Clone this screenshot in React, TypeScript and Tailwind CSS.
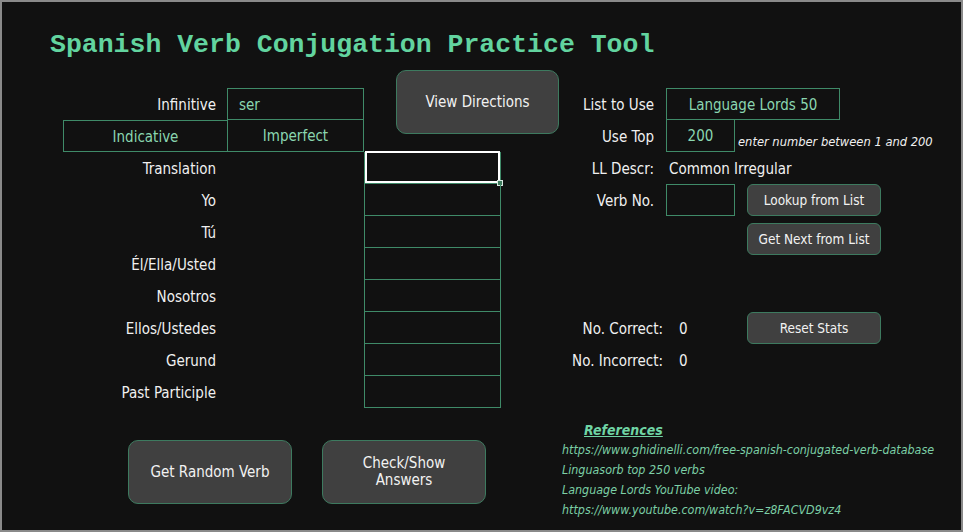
import React from 'react';

// Excel-style practice sheet, dark theme.
const FONT = "font-['DejaVu_Sans_Condensed','DejaVu_Sans',sans-serif] font-stretch-condensed";
const CELL = 'border-[#3f8a68]';
const GREEN_TXT = 'text-[#8ad6b0]';

const FORMS = [
  'Translation',
  'Yo',
  'Tú',
  'Él/Ella/Usted',
  'Nosotros',
  'Ellos/Ustedes',
  'Gerund',
  'Past Participle',
];

function SheetButton({
  children,
  className,
}: {
  children: React.ReactNode;
  className: string;
}) {
  return (
    <button
      className={`flex items-center justify-center bg-[#404040] border border-[#3d7a5f] text-[#f2f2f2] text-center ${className}`}
    >
      {children}
    </button>
  );
}

export default function App() {
  return (
    <div
      className={`w-[963px] h-[532px] overflow-hidden bg-[#111111] border-2 border-[#8a8a8a] text-[#f0f0f0] text-[15px] ${FONT}`}
    >
      {/* Title */}
      <div className="h-[68px] pt-[29px] pl-[48px]">
        <h1 className="font-['Liberation_Mono',monospace] font-bold text-[26.5px] leading-[28px] text-[#62d49f]">
          Spanish Verb Conjugation Practice Tool
        </h1>
      </div>

      <div className="flex">
        {/* Left: verb grid */}
        <div className="ml-[61px] w-[496px]">
          <div className="grid grid-cols-[164px_137px_32px_105px_58px] grid-rows-[18px_32px_14px_18px_repeat(8,32px)]">
            <div className="col-start-1 row-start-2 flex items-center justify-end pr-[11px] pt-[2px]">
              Infinitive
            </div>
            <div className={`col-start-2 row-start-2 border ${CELL} flex items-center pl-[11px] pt-[2px] ${GREEN_TXT}`}>
              ser
            </div>
            <div className="col-start-4 col-span-2 row-start-1 row-span-3">
              <SheetButton className="w-full h-full rounded-[10px]">View Directions</SheetButton>
            </div>
            <div className={`col-start-1 row-start-3 row-span-2 border-l border-t border-b ${CELL} flex items-center justify-center pt-[2px] ${GREEN_TXT}`}>
              Indicative
            </div>
            <div className={`col-start-2 row-start-3 row-span-2 border-l border-r border-b ${CELL} flex items-center justify-center pt-[2px] ${GREEN_TXT}`}>
              Imperfect
            </div>

            {FORMS.map((f, i) => (
              <React.Fragment key={f}>
                <div
                  className="col-start-1 flex items-center justify-end pr-[11px] pt-[2px]"
                  style={{ gridRowStart: i + 5 }}
                >
                  {f}
                </div>
                <div
                  className={`col-start-3 col-span-2 relative border-x border-b ${CELL}`}
                  style={{ gridRowStart: i + 5 }}
                >
                  {i === 0 && (
                    <>
                      <div className="absolute inset-0 -top-px border-2 border-white" />
                      <div className="absolute -right-[3px] -bottom-[3px] w-[6px] h-[6px] bg-[#3d7a5c] border border-[#d8e8e0]" />
                    </>
                  )}
                </div>
              </React.Fragment>
            ))}
          </div>

          <div className="flex gap-[30px] mt-[32px] ml-[65px]">
            <SheetButton className="w-[164px] h-[64px] rounded-[10px]">Get Random Verb</SheetButton>
            <SheetButton className="w-[164px] h-[64px] rounded-[10px] leading-[17px]">
              Check/Show
              <br />
              Answers
            </SheetButton>
          </div>
        </div>

        {/* Right: list controls, stats, references */}
        <div className="w-[400px] pt-[18px]">
          <div className="flex h-[32px]">
            <div className="w-[107px] flex items-center justify-end pr-[12px] pt-[2px]">List to Use</div>
            <div className={`w-[174px] border ${CELL} flex items-center justify-center pt-[2px] ${GREEN_TXT}`}>
              Language Lords 50
            </div>
          </div>
          <div className="flex h-[32px]">
            <div className="w-[107px] flex items-center justify-end pr-[12px] pt-[2px]">Use Top</div>
            <div className={`w-[69px] border-x border-b ${CELL} flex items-center justify-center pt-[2px] ${GREEN_TXT}`}>
              200
            </div>
            <div className="ml-[3px] pt-[15px] italic text-[12.8px] leading-[14px] whitespace-nowrap">
              enter number between 1 and 200
            </div>
          </div>
          <div className="flex h-[32px] items-center pt-[2px]">
            <div className="w-[107px] text-right pr-[12px]">LL Descr:</div>
            <div className="pl-[3px]">Common Irregular</div>
          </div>
          <div className="flex h-[32px]">
            <div className="w-[107px] flex items-center justify-end pr-[12px] pt-[2px]">Verb No.</div>
            <div className={`w-[69px] border ${CELL}`} />
            <SheetButton className="ml-[12px] w-[134px] h-[32px] rounded-[6px] text-[13.5px]">
              Lookup from List
            </SheetButton>
          </div>
          <div className="flex h-[32px] items-start">
            <SheetButton className="ml-[188px] mt-[7px] w-[134px] h-[32px] rounded-[6px] text-[13.5px]">
              Get Next from List
            </SheetButton>
          </div>

          <div className="mt-[64px]">
            <div className="flex h-[32px] items-center">
              <div className="w-[107px] text-right pr-[3px] pt-[2px] whitespace-nowrap">No. Correct:</div>
              <div className="w-[81px] pl-[13px] pt-[2px]">0</div>
              <SheetButton className="w-[134px] h-[32px] rounded-[6px] text-[13.5px]">Reset Stats</SheetButton>
            </div>
            <div className="flex h-[32px] items-center pt-[2px]">
              <div className="w-[107px] text-right pr-[3px] whitespace-nowrap">No. Incorrect:</div>
              <div className="pl-[13px]">0</div>
            </div>
          </div>

          <div className="mt-[40px] h-[24px] pt-[4px] pl-[25px] flex items-center">
            <span className="font-bold italic underline text-[14px] text-[#6fd4a4]">References</span>
          </div>
          <div className="pl-[3px] italic text-[12.4px] text-[#7ccfa6] whitespace-nowrap">
            <div className="h-[20px] flex items-center">
              https://www.ghidinelli.com/free-spanish-conjugated-verb-database
            </div>
            <div className="h-[20px] flex items-center">Linguasorb top 250 verbs</div>
            <div className="h-[20px] flex items-center">Language Lords YouTube video:</div>
            <div className="h-[20px] flex items-center">https://www.youtube.com/watch?v=z8FACVD9vz4</div>
          </div>
        </div>
      </div>
    </div>
  );
}
